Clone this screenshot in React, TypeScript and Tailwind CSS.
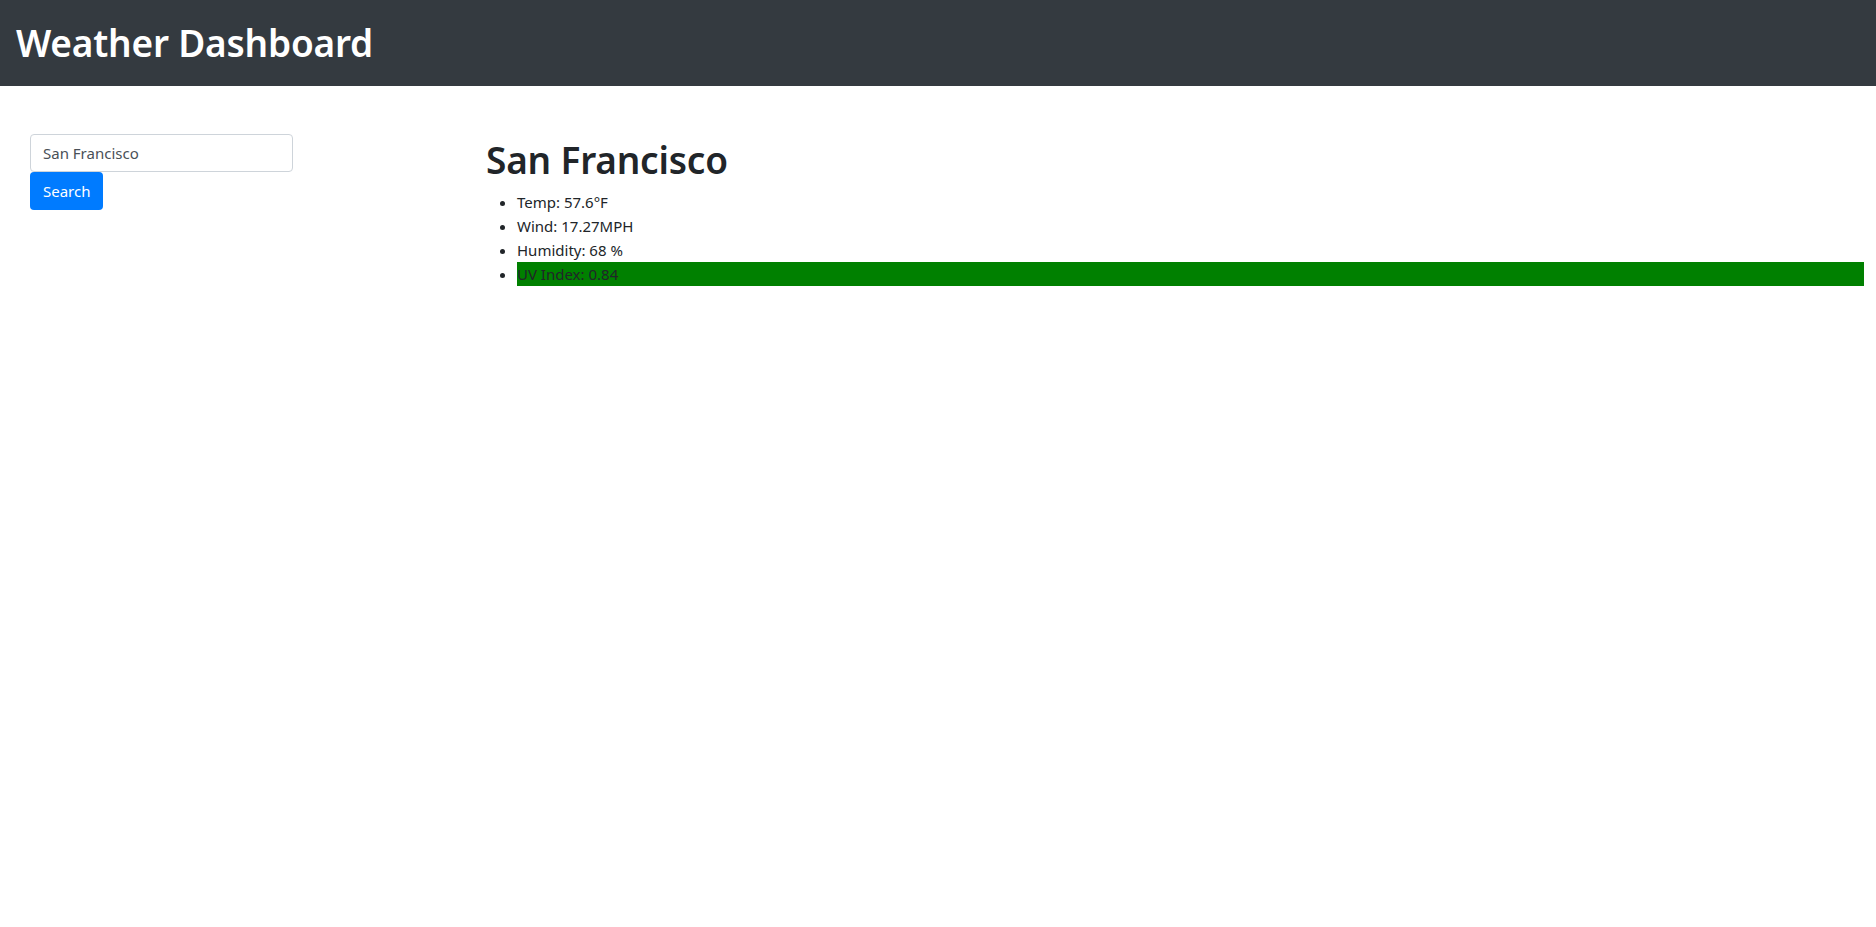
import { useState } from 'react'

const font = { fontFamily: '"Noto Sans", "Open Sans", sans-serif' }

export default function App() {
  const [city, setCity] = useState('San Francisco')

  return (
    <div className="min-h-[927px] bg-white text-[#212529]" style={font}>
      <header className="h-[86px] bg-[#343a40] px-4 flex items-center">
        <h1 className="text-[37px] font-semibold leading-[1.2] text-white tracking-[-0.2px]">Weather Dashboard</h1>
      </header>

      <main className="flex pt-12">
        <section className="w-[470px] shrink-0 pl-[30px]">
          <input
            value={city}
            onChange={(e) => setCity(e.target.value)}
            className="block w-[263px] h-[38px] px-3 text-[15px] text-[#495057] border border-[#ced4da] rounded bg-white outline-none"
          />
          <button className="h-[38px] px-[13px] bg-[#007bff] text-white text-[15px] rounded">Search</button>
        </section>

        <section className="flex-1 pl-4 pr-3">
          <h2 className="text-[37px] font-semibold leading-[48px] pt-[2px] mb-[6px] tracking-[-0.2px]">{city}</h2>
          <ul className="list-disc pl-[31px] text-[15px] leading-6">
            <li>Temp: 57.6°F</li>
            <li>Wind: 17.27MPH</li>
            <li>Humidity: 68 %</li>
            <li className="bg-[#008000]">UV Index: 0.84</li>
          </ul>
        </section>
      </main>
    </div>
  )
}
